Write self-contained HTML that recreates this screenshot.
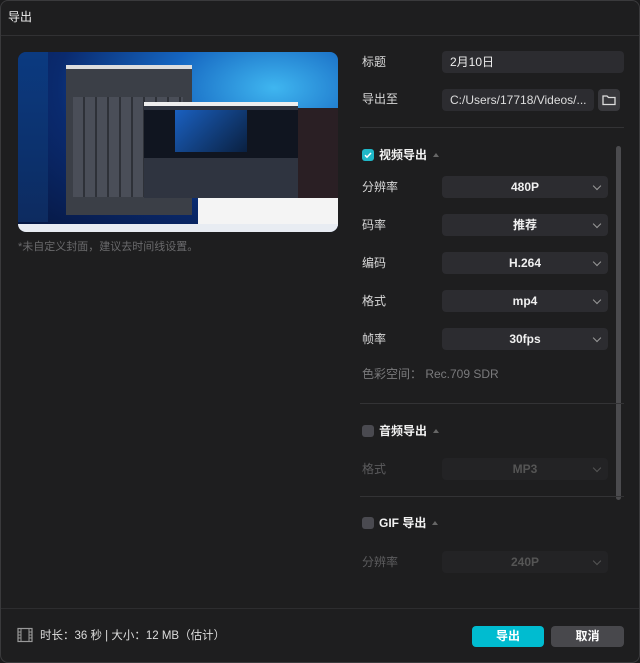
<!DOCTYPE html>
<html><head><meta charset="utf-8"><style>
*{margin:0;padding:0;box-sizing:border-box}
body{width:640px;height:663px;background:#1b1b1c;font-family:"Liberation Sans","Noto Sans CJK SC",sans-serif;color:#e6e6e6;font-size:12px;position:relative;overflow:hidden}
.frame{position:absolute;left:0;top:0;width:640px;height:663px;border:1px solid #3a3a3c;border-radius:8px;background:#1e1e1f}
.abs{position:absolute}
.lbl{position:absolute;left:362px;color:#d8d8d8;font-size:12px;line-height:14px}
.dim{color:#5c5c5e}
.inp{position:absolute;background:#2c2c30;border-radius:4px;height:22px;line-height:22px;font-size:12px}
.dd{left:442px;width:166px;text-align:center;font-weight:bold;color:#f0f0f0}
.dd::after{content:"";position:absolute;right:8px;top:7px;width:5px;height:5px;border-right:1.5px solid #999;border-bottom:1.5px solid #999;transform:rotate(45deg)}
.dd.off{background:#232325;color:#555}
.dd.off::after{border-color:#555}
.hr{position:absolute;left:360px;width:264px;height:1px;background:#333335}
.sec{position:absolute;left:362px;font-weight:bold;font-size:12px;line-height:14px;color:#f2f2f2;display:flex;align-items:center}
.cb{width:12px;height:12px;border-radius:3px;background:#4a4a50;margin-right:5px}
.tri{width:0;height:0;border-left:3.5px solid transparent;border-right:3.5px solid transparent;border-bottom:4px solid #666;margin-left:6px}
</style></head><body>
<div class="frame"></div>
<div class="abs" style="left:8px;top:10px;font-size:12px;line-height:14px;color:#eee">导出</div>
<div class="abs" style="left:1px;top:35px;width:638px;height:1px;background:#313133"></div>

<div class="abs" style="left:18px;top:52px;width:320px;height:180px;border-radius:8px;overflow:hidden;background:radial-gradient(ellipse at 80% 20%,#3fb6f0 0%,#1565c0 30%,#0a2a6e 60%,#06163f 100%)">
 <div class="abs" style="left:0;top:0;width:30px;height:170px;background:linear-gradient(#0b3a80,#0d2b60)"></div>
 <div class="abs" style="left:48px;top:13px;width:126px;height:150px;background:#3b3f47;border-top:4px solid #ddd"></div>
 <div class="abs" style="left:55px;top:45px;width:110px;height:100px;background:repeating-linear-gradient(90deg,#4a4e58 0 10px,#2e3138 10px 12px)"></div>
 <div class="abs" style="left:126px;top:50px;width:154px;height:96px;background:#2f3440;border-top:4px solid #eee"></div>
 <div class="abs" style="left:126px;top:58px;width:154px;height:48px;background:#101520"></div>
 <div class="abs" style="left:157px;top:58px;width:72px;height:42px;background:linear-gradient(135deg,#1a60c0,#0a2040)"></div>
 <div class="abs" style="left:280px;top:56px;width:40px;height:90px;background:#2a1f24"></div>
 <div class="abs" style="left:180px;top:146px;width:140px;height:28px;background:#f4f4f4"></div>
 <div class="abs" style="left:0;top:172px;width:320px;height:8px;background:#e8ecf2"></div>
</div>
<div class="abs" style="left:18px;top:241px;font-size:11px;line-height:13px;color:#6a6a6c">*未自定义封面，建议去时间线设置。</div>

<div class="lbl" style="top:55px">标题</div>
<div class="inp" style="left:442px;top:51px;width:182px;padding-left:8px;color:#eee">2月10日</div>
<div class="lbl" style="top:92px">导出至</div>
<div class="inp" style="left:442px;top:89px;width:152px;padding-left:8px;color:#ddd">C:/Users/17718/Videos/...</div>
<div class="inp" style="left:598px;top:89px;width:22px;background:#38383c">
<svg width="22" height="22" viewBox="0 0 22 22"><path d="M5 7h4l1.5 1.5H17v7H5z" fill="none" stroke="#ddd" stroke-width="1.3"/></svg></div>
<div class="hr" style="top:127px"></div>

<div class="abs" style="left:616px;top:146px;width:5px;height:354px;border-radius:3px;background:#4b4b4e"></div>

<div class="sec" style="top:148px"><span class="cb" style="background:#1fb8c8;position:relative"><svg width="12" height="12" viewBox="0 0 12 12"><path d="M3 6.2l2 2 4-4.2" fill="none" stroke="#fff" stroke-width="1.5"/></svg></span>视频导出<span class="tri"></span></div>
<div class="lbl" style="top:180px">分辨率</div><div class="inp dd" style="top:176px">480P</div>
<div class="lbl" style="top:218px">码率</div><div class="inp dd" style="top:214px">推荐</div>
<div class="lbl" style="top:256px">编码</div><div class="inp dd" style="top:252px">H.264</div>
<div class="lbl" style="top:294px">格式</div><div class="inp dd" style="top:290px">mp4</div>
<div class="lbl" style="top:332px">帧率</div><div class="inp dd" style="top:328px">30fps</div>
<div class="lbl" style="top:367px;color:#7a7a7c">色彩空间：&nbsp;Rec.709 SDR</div>
<div class="hr" style="top:403px"></div>

<div class="sec" style="top:424px"><span class="cb"></span>音频导出<span class="tri"></span></div>
<div class="lbl dim" style="top:462px">格式</div><div class="inp dd off" style="top:458px">MP3</div>
<div class="hr" style="top:496px"></div>

<div class="sec" style="top:516px"><span class="cb"></span>GIF 导出<span class="tri"></span></div>
<div class="lbl dim" style="top:555px">分辨率</div><div class="inp dd off" style="top:551px">240P</div>

<div class="abs" style="left:1px;top:608px;width:638px;height:1px;background:#2d2d2f"></div>
<svg class="abs" style="left:17px;top:627px" width="16" height="16" viewBox="0 0 16 16"><rect x="1" y="1.5" width="14" height="13" fill="none" stroke="#999" stroke-width="1.2"/><path d="M4 1.5v13M12 1.5v13M1 5h3M1 8h3M1 11h3M12 5h3M12 8h3M12 11h3" stroke="#999" stroke-width="1"/></svg>
<div class="abs" style="left:40px;top:629px;color:#ddd;font-size:11.5px;line-height:14px">时长：36 秒 | 大小：12 MB（估计）</div>
<div class="abs" style="left:472px;top:626px;width:72px;height:21px;border-radius:4px;background:#00bcd0;color:#fff;text-align:center;line-height:21px;font-weight:bold">导出</div>
<div class="abs" style="left:551px;top:626px;width:73px;height:21px;border-radius:4px;background:#48484c;color:#fff;text-align:center;line-height:21px;font-weight:bold">取消</div>
</body></html>
